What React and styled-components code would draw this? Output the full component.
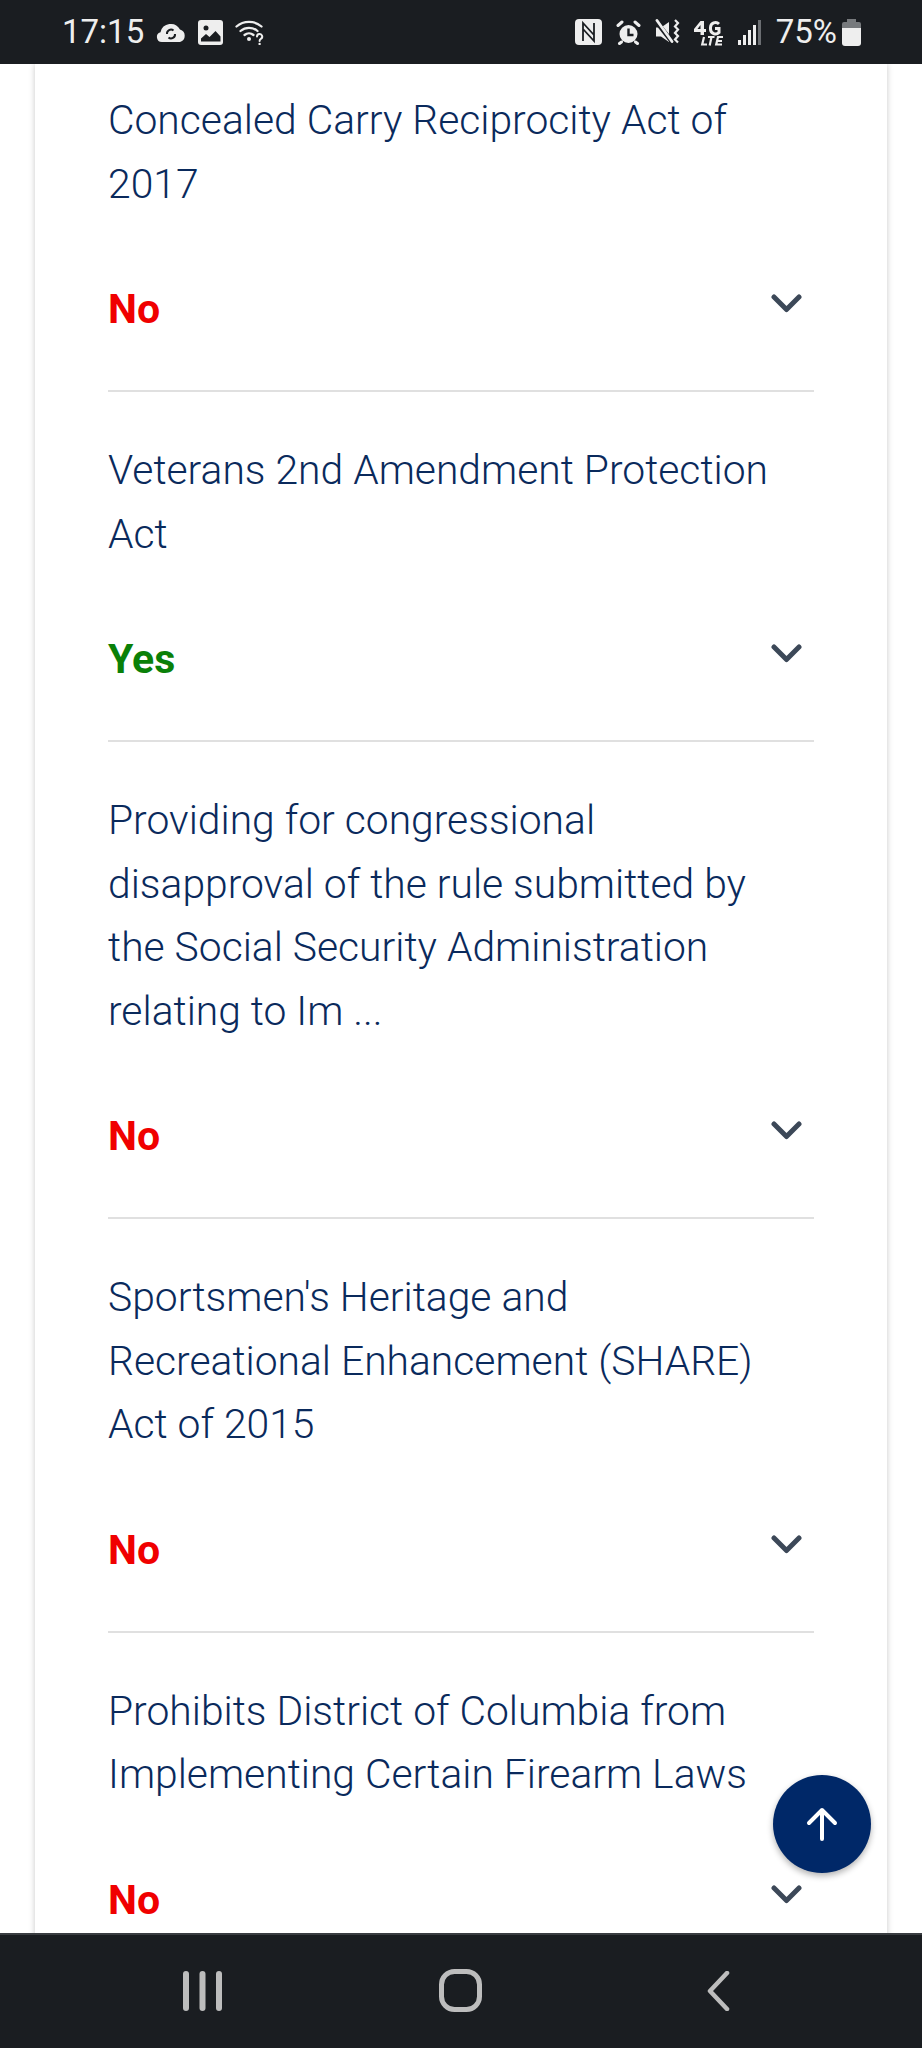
import React from "react";
import styled, { createGlobalStyle } from "styled-components";

const GlobalStyle = createGlobalStyle`
  html, body {
    margin: 0;
    padding: 0;
    background: #fff;
  }
`;

const Phone = styled.div`
  position: relative;
  display: flex;
  flex-direction: column;
  width: 922px;
  height: 2048px;
  overflow: hidden;
  font-family: Roboto, "Liberation Sans", sans-serif;
`;

const StatusBar = styled.div`
  flex: 0 0 64px;
  display: flex;
  align-items: center;
  justify-content: space-between;
  padding: 0 61px 0 62px;
  box-sizing: border-box;
  background: #1a1d21;
  color: #eee;
`;

const StatusGroup = styled.div`
  display: flex;
  align-items: center;
  gap: ${(p) => p.$gap}px;
`;

const StatusText = styled.span`
  font-size: 33px;
  font-weight: 400;
  line-height: 40px;
`;

const Content = styled.main`
  flex: 1;
  min-height: 0;
  overflow: hidden;
  background: #fff;
`;

const Card = styled.section`
  margin: 0 35px;
  padding: 0 73px;
  background: #fff;
  box-shadow: 0 0 6px rgba(0, 0, 0, 0.22);
  min-height: 100%;
  box-sizing: border-box;
`;

const Vote = styled.article`
  padding: 47px 0 0;
  border-bottom: 2px solid #e0e0e0;
  &:first-child {
    padding-top: 25px;
  }
  &:last-child {
    border-bottom: 0;
  }
`;

const Title = styled.h3`
  margin: 0;
  max-width: 680px;
  font-size: 40.8px;
  font-weight: 300;
  line-height: 63.5px;
  color: #0a2a5c;
`;

const VoteRow = styled.div`
  display: flex;
  align-items: flex-start;
  justify-content: space-between;
  padding: 71px 12px 59px 0;
`;

const Verdict = styled.span`
  font-size: 41px;
  font-weight: 700;
  line-height: 44px;
  color: ${(p) => (p.$yes ? "#0a8008" : "#f00000")};
`;

const Chevron = styled.svg`
  display: block;
  width: 31px;
  height: 19px;
  margin-top: 7px;
`;

const TopButton = styled.button`
  position: absolute;
  left: 773px;
  top: 1775px;
  display: flex;
  align-items: center;
  justify-content: center;
  width: 98px;
  height: 98px;
  padding: 0;
  border: 0;
  border-radius: 50%;
  background: #002868;
  box-shadow: 0 3px 6px rgba(0, 0, 0, 0.3);
`;

const NavBar = styled.nav`
  flex: 0 0 115px;
  display: flex;
  align-items: center;
  box-sizing: border-box;
  padding: 0 0 2px 73px;
  background: #1a1d21;
  border-top: 2px solid #3a3d41;
`;

const NavSlot = styled.div`
  flex: 0 0 258px;
  display: flex;
  justify-content: center;
`;

const votes = [
  { title: "Concealed Carry Reciprocity Act of 2017", yes: false },
  { title: "Veterans 2nd Amendment Protection Act", yes: true },
  {
    title:
      "Providing for congressional disapproval of the rule submitted by the Social Security Administration relating to Im ...",
    yes: false,
  },
  {
    title: "Sportsmen's Heritage and Recreational Enhancement (SHARE) Act of 2015",
    yes: false,
  },
  {
    title: "Prohibits District of Columbia from Implementing Certain Firearm Laws",
    yes: false,
  },
];

const CloudSync = () => (
  <svg width="30" height="22" viewBox="0 0 30 22">
    <path fill="#eee" d="M6 21a5 5 0 0 1-1.500-9.800A10.500 10.500 0 0 1 24 8.500 6.500 6.500 0 0 1 24 21z" />
    <path fill="none" stroke="#1a1d21" strokeWidth="2" d="M11 13a4 4 0 0 1 6.500-3.500M19 13a4 4 0 0 1-6.500 3.500" />
  </svg>
);

const Picture = () => (
  <svg width="25" height="25" viewBox="0 0 25 25">
    <rect width="25" height="25" rx="3" fill="#eee" />
    <circle cx="8" cy="8" r="2.500" fill="#1a1d21" />
    <path fill="#1a1d21" d="M3 21.500v-3l5-4.500 3.500 3 6-6 5 5.500v5z" />
  </svg>
);

const WifiHelp = () => (
  <svg width="30" height="26" viewBox="0 0 30 26" fill="none" stroke="#eee" strokeWidth="2.300" strokeLinecap="round">
    <path d="M1.500 7.500a19 19 0 0 1 25 0" />
    <path d="M5.500 12a13 13 0 0 1 17 0" />
    <path d="M9.500 16a7 7 0 0 1 9 0" />
    <circle cx="14" cy="20" r="2" fill="#eee" stroke="none" />
    <path strokeWidth="2" d="M22 17.500a2.600 2.600 0 1 1 3.800 2.400c-.9.500-1.200 1-1.200 2" />
    <circle cx="24.600" cy="25" r="1.200" fill="#eee" stroke="none" />
  </svg>
);

const Nfc = () => (
  <svg width="27" height="26" viewBox="0 0 27 26">
    <rect width="27" height="26" rx="4" fill="#eee" />
    <path fill="none" stroke="#1a1d21" strokeWidth="1.800" d="M8 22V4l11 12M19 4v18L8 10" />
  </svg>
);

const Alarm = () => (
  <svg width="25" height="25" viewBox="0 0 25 25">
    <circle cx="12.500" cy="14" r="9" fill="#eee" />
    <path fill="none" stroke="#1a1d21" strokeWidth="2.400" d="M12.500 8.500V15h5" />
    <path fill="none" stroke="#eee" strokeWidth="3" strokeLinecap="round" d="M2 5.500L6 2M23 5.500L19 2M5.500 22l-2 1.500M19.500 22l2 1.500" />
  </svg>
);

const MuteVibrate = () => (
  <svg width="25" height="26" viewBox="0 0 25 26">
    <path fill="#eee" d="M1 8.500h5L14 3v20l-8-5.500H1z" />
    <path stroke="#1a1d21" strokeWidth="4.500" d="M0 1l18 23" />
    <path stroke="#eee" strokeWidth="2.800" strokeLinecap="round" d="M2 1.500l15 21" />
    <path fill="none" stroke="#eee" strokeWidth="2.200" d="M20 1l3 3-3 3.500 3 3-3 3.500 3 3-3 3.500 3 3" />
  </svg>
);

const FourGLte = () => (
  <svg width="30" height="27" viewBox="0 0 30 27">
    <path fill="#eee" d="M6.500 2h3.500v8h2v3h-2v3H6.500v-3H0v-3zM6.500 6L3.500 10h3z" />
    <path fill="none" stroke="#eee" strokeWidth="3" d="M25 5a5 5 0 0 0-8.500 3.500v1.500a5 5 0 0 0 8.500 3.500V9.500h-4" />
    <path fill="none" stroke="#eee" strokeWidth="2.200" d="M10 18l-1.800 7.500h4.800M14 18h6.500M17.500 18l-1.800 8.500M29 18h-5l-1.800 7.500H28M23.500 22h4.500" />
  </svg>
);

const Signal = () => (
  <svg width="24" height="25" viewBox="0 0 24 25">
    <rect x="0" y="20" width="3" height="5" fill="#eee" />
    <rect x="5" y="15" width="3" height="10" fill="#eee" />
    <rect x="10" y="10" width="3" height="15" fill="#eee" />
    <rect x="15" y="5" width="3" height="20" fill="#eee" />
    <rect x="20" y="0" width="3" height="25" fill="#6b6e72" />
  </svg>
);

const Battery = () => (
  <svg width="19" height="27" viewBox="0 0 19 27">
    <path fill="#777a7d" d="M5 0h9v3h3a2 2 0 0 1 2 2v5H0V5a2 2 0 0 1 2-2h3z" />
    <path fill="#eee" d="M0 9h19v15a3 3 0 0 1-3 3H3a3 3 0 0 1-3-3z" />
  </svg>
);

const App = () => (
  <>
    <GlobalStyle />
    <Phone>
      <StatusBar>
        <StatusGroup $gap={12}>
          <StatusText>17:15</StatusText>
          <CloudSync />
          <Picture />
          <WifiHelp />
        </StatusGroup>
        <StatusGroup $gap={14}>
          <Nfc />
          <Alarm />
          <MuteVibrate />
          <FourGLte />
          <Signal />
          <StatusGroup $gap={5}>
            <StatusText>75%</StatusText>
            <Battery />
          </StatusGroup>
        </StatusGroup>
      </StatusBar>
      <Content>
        <Card>
          {votes.map((vote) => (
            <Vote key={vote.title}>
              <Title>{vote.title}</Title>
              <VoteRow>
                <Verdict $yes={vote.yes}>{vote.yes ? "Yes" : "No"}</Verdict>
                <Chevron viewBox="0 0 31 19" fill="none" stroke="#3c4858" strokeWidth="5" strokeLinecap="round" strokeLinejoin="round">
                  <path d="M3 3l12.500 12.500L28 3" />
                </Chevron>
              </VoteRow>
            </Vote>
          ))}
        </Card>
      </Content>
      <TopButton aria-label="Back to top">
        <svg width="32" height="34" viewBox="0 0 32 34" fill="none" stroke="#fff" strokeWidth="4" strokeLinecap="round" strokeLinejoin="round">
          <path d="M16 32V3M3 16L16 3l13 13" />
        </svg>
      </TopButton>
      <NavBar>
        <NavSlot>
          <svg width="39" height="40" viewBox="0 0 39 40" fill="#bdbdbd">
            <rect x="0" y="0" width="6" height="40" rx="3" />
            <rect x="16.500" y="0" width="6" height="40" rx="3" />
            <rect x="33" y="0" width="6" height="40" rx="3" />
          </svg>
        </NavSlot>
        <NavSlot>
          <svg width="43" height="43" viewBox="0 0 43 43" fill="none" stroke="#bdbdbd" strokeWidth="5">
            <rect x="2.500" y="2.500" width="38" height="38" rx="13" />
          </svg>
        </NavSlot>
        <NavSlot>
          <svg width="24" height="40" viewBox="0 0 24 40" fill="none" stroke="#bdbdbd" strokeWidth="4.500" strokeLinecap="round" strokeLinejoin="round">
            <path d="M21 2L4 20l17 18" />
          </svg>
        </NavSlot>
      </NavBar>
    </Phone>
  </>
);

export default App;
